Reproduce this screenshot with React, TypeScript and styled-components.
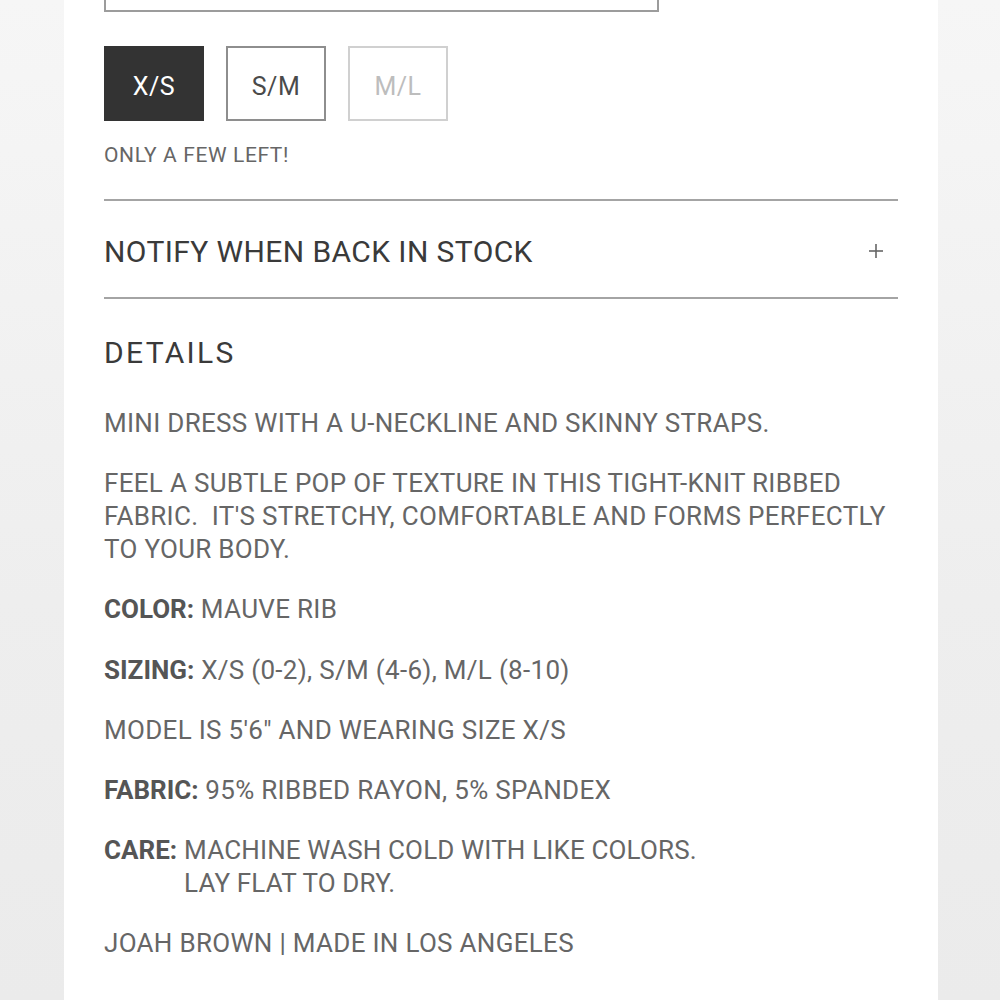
import React from "react";
import styled, { createGlobalStyle, css } from "styled-components";

const GlobalStyle = createGlobalStyle`
  html, body {
    margin: 0;
    padding: 0;
  }
  body {
    background: linear-gradient(to bottom, #f6f6f6 0%, #eeeeee 60%, #ebebeb 100%);
    font-family: Roboto, "Liberation Sans", Arial, sans-serif;
    -webkit-font-smoothing: antialiased;
  }
`;

const Card = styled.main`
  width: 874px;
  min-height: 1000px;
  margin: 0 62px 0 64px;
  padding: 0 40px;
  box-sizing: border-box;
  background: #ffffff;
  display: flex;
  flex-direction: column;
  overflow: hidden;
`;

const SelectBox = styled.div`
  width: 555px;
  height: 60px;
  margin-top: -48px;
  border: 2px solid #9c9c9c;
  box-sizing: border-box;
`;

const SizeRow = styled.div`
  display: flex;
  gap: 22px;
  margin-top: 34px;
`;

type SizeState = "selected" | "available" | "soldout";

const SizeButton = styled.button<{ $state: SizeState }>`
  width: 100px;
  height: 75px;
  box-sizing: border-box;
  display: flex;
  align-items: center;
  justify-content: center;
  font-family: Roboto, "Liberation Sans", Arial, sans-serif;
  font-size: 25px;
  letter-spacing: 0.5px;
  padding: 5px 0 0;
  cursor: pointer;
  ${({ $state }) =>
    $state === "selected"
      ? css`
          background: #333333;
          border: 2px solid #333333;
          color: #ffffff;
        `
      : $state === "available"
      ? css`
          background: #ffffff;
          border: 2px solid #8e8e8e;
          color: #4a4a4a;
        `
      : css`
          background: #ffffff;
          border: 2px solid #d0d0d0;
          color: #bdbdbd;
        `}
`;

const StockNote = styled.p`
  margin: 22px 0 0;
  font-size: 21px;
  line-height: 24px;
  letter-spacing: 0.6px;
  color: #666666;
`;

const AccordionRow = styled.div`
  margin-top: 32px;
  height: 100px;
  box-sizing: border-box;
  border-top: 2px solid #a4a4a4;
  border-bottom: 2px solid #a4a4a4;
  display: flex;
  align-items: center;
  justify-content: space-between;
  padding: 4px 15px 0 0;
`;

const AccordionTitle = styled.span`
  font-size: 30px;
  letter-spacing: 0.4px;
  color: #3a3a3a;
`;

const PlusIcon = styled.svg`
  width: 14px;
  height: 14px;
  display: block;
`;

const SectionTitle = styled.h2`
  margin: 37px 0 0;
  font-size: 30px;
  line-height: 33px;
  font-weight: 400;
  letter-spacing: 2.3px;
  color: #3a3a3a;
`;

const Body = styled.div`
  margin-top: 38px;
  display: flex;
  flex-direction: column;
  gap: 27.2px;
`;

const Para = styled.p`
  margin: 0;
  font-size: 26px;
  line-height: 33px;
  letter-spacing: 0.3px;
  color: #666666;
`;

const Label = styled.b`
  font-weight: 700;
  color: #555555;
  letter-spacing: 0;
`;

const LabeledRow = styled.div`
  display: flex;
  gap: 7px;
  font-size: 26px;
  line-height: 33px;
  letter-spacing: 0.15px;
  color: #666666;
`;

const LabeledValue = styled.div`
  display: flex;
  flex-direction: column;
`;

const sizes: { label: string; state: SizeState }[] = [
  { label: "X/S", state: "selected" },
  { label: "S/M", state: "available" },
  { label: "M/L", state: "soldout" },
];

export default function App() {
  return (
    <>
      <GlobalStyle />
      <Card>
        <SelectBox />
        <SizeRow>
          {sizes.map((s) => (
            <SizeButton key={s.label} $state={s.state}>
              {s.label}
            </SizeButton>
          ))}
        </SizeRow>
        <StockNote>ONLY A FEW LEFT!</StockNote>
        <AccordionRow>
          <AccordionTitle>NOTIFY WHEN BACK IN STOCK</AccordionTitle>
          <PlusIcon viewBox="0 0 14 14" aria-hidden="true">
            <line x1="7" y1="0" x2="7" y2="14" stroke="#666" strokeWidth="1.6" />
            <line x1="0" y1="7" x2="14" y2="7" stroke="#666" strokeWidth="1.6" />
          </PlusIcon>
        </AccordionRow>
        <SectionTitle>DETAILS</SectionTitle>
        <Body>
          <Para>MINI DRESS WITH A U-NECKLINE AND SKINNY STRAPS.</Para>
          <Para>
            FEEL A SUBTLE POP OF TEXTURE IN THIS TIGHT-KNIT RIBBED
            <br />
            FABRIC.&nbsp; IT'S STRETCHY, COMFORTABLE AND FORMS PERFECTLY
            <br />
            TO YOUR BODY.
          </Para>
          <Para>
            <Label>COLOR:</Label> MAUVE RIB
          </Para>
          <Para>
            <Label>SIZING:</Label> X/S (0-2), S/M (4-6), M/L (8-10)
          </Para>
          <Para>MODEL IS 5'6" AND WEARING SIZE X/S</Para>
          <Para>
            <Label>FABRIC:</Label> 95% RIBBED RAYON, 5% SPANDEX
          </Para>
          <LabeledRow>
            <Label>CARE:</Label>
            <LabeledValue>
              <span>MACHINE WASH COLD WITH LIKE COLORS.</span>
              <span>LAY FLAT TO DRY.</span>
            </LabeledValue>
          </LabeledRow>
          <Para>JOAH BROWN | MADE IN LOS ANGELES</Para>
        </Body>
      </Card>
    </>
  );
}
